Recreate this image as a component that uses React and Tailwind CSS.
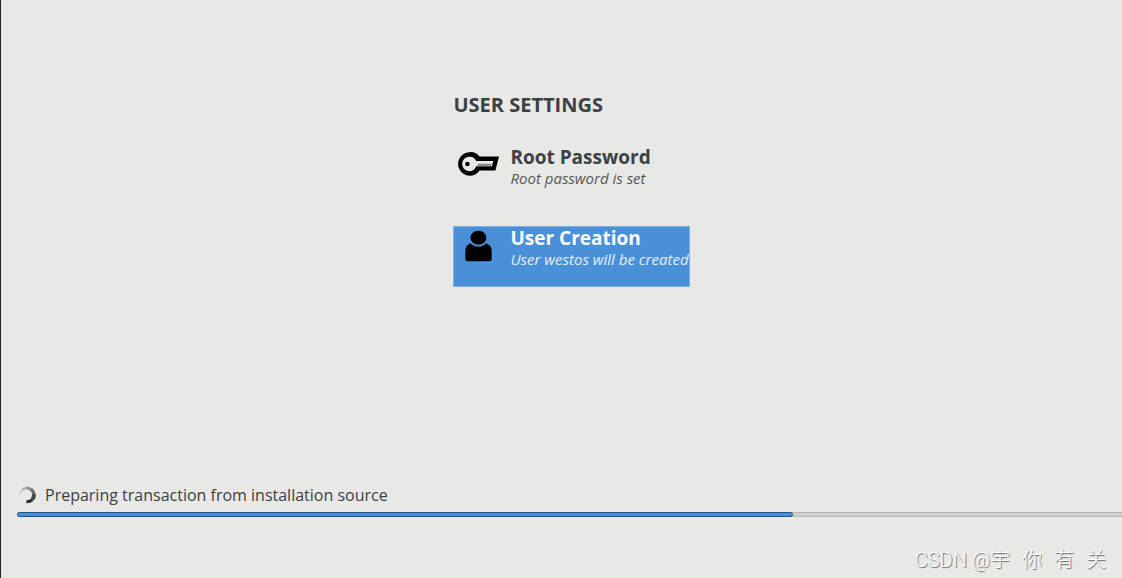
function KeyIcon() {
    return (
        <svg viewBox="0 0 48 40" className="h-10 w-12 shrink-0" aria-hidden="true">
            <path
                d="M15 6.2a11.8 11.8 0 1 0 10.6 18.4H41.4L45 10.4H25.6A12 12 0 0 0 15 6.2Z"
                fill="#000"
            />
            <path
                d="M15 10.8a7.2 7.2 0 1 0 7.2 9.4H37.8L39.2 15H22.2A7.2 7.2 0 0 0 15 10.8Z"
                fill="#e8e8e6"
            />
            <path d="M24 17.8H37.4L36.7 20.2H23.4Z" fill="#8c8c8c" />
            <circle cx="13.4" cy="18" r="2.3" fill="#000" />
        </svg>
    );
}

function UserIcon() {
    return (
        <svg viewBox="0 0 48 40" className="h-10 w-12 shrink-0" aria-hidden="true">
            <ellipse cx="24.4" cy="10.8" rx="8" ry="7" fill="#000" />
            <path
                d="M16.8 16.5C18.6 18.6 21.2 19.6 24.4 19.6S30.2 18.6 32 16.5C35.6 17.2 37.7 20.2 37.7 24.2V31.6Q37.7 34.2 35.2 34.2H13.8Q11.3 34.2 11.3 31.6V24.2C11.3 20.2 13.2 17.2 16.8 16.5Z"
                fill="#000"
            />
        </svg>
    );
}

function Spinner() {
    return (
        <svg viewBox="0 0 20 20" className="size-5" fill="none" stroke="#2e3436" aria-hidden="true">
            <path d="M2.6 9A8 8 0 0 1 5.2 5" strokeWidth="2" opacity="0.15" />
            <path d="M5.2 5A7.4 7.4 0 0 1 9.5 3" strokeWidth="2.4" opacity="0.3" />
            <path d="M9.5 3A7.2 7.2 0 0 1 14 4.4" strokeWidth="2.8" opacity="0.5" />
            <path d="M14 4.4A7.2 7.2 0 0 1 17 9" strokeWidth="3.4" opacity="0.7" />
            <path d="M17 9A7.2 7.2 0 0 1 15.2 14.6" strokeWidth="3.8" opacity="0.9" />
            <path d="M15.2 14.6A7.2 7.2 0 0 1 9.4 16.6" strokeWidth="3.4" />
        </svg>
    );
}

function Spoke({ icon, title, status, selected }) {
    return (
        <button
            type="button"
            className={
                selected
                    ? "flex h-[61px] items-start gap-2 border border-[#7fb0e4] bg-[#4a90d9] text-left text-white"
                    : "flex h-[61px] items-start gap-2 border border-transparent text-left"
            }
        >
            {icon}
            <span className="flex flex-col whitespace-nowrap">
                <span className="text-[19px] leading-[22px] font-bold">{title}</span>
                <span className="text-[15px] leading-5 italic opacity-85">{status}</span>
            </span>
        </button>
    );
}

export default function App() {
    return (
        <div
            className="flex min-h-screen flex-col overflow-hidden border-l border-[#222] bg-[#e8e8e6] text-[#3b4144]"
            style={{ fontFamily: '"Open Sans", "Noto Sans", "Noto Sans CJK SC", sans-serif' }}
        >
            <main className="flex flex-1 justify-center pt-[93px] pl-5">
                <section className="flex flex-col">
                    <h1 className="mb-7 text-xl leading-6 font-bold">USER SETTINGS</h1>
                    <div className="flex flex-col gap-5">
                        <Spoke icon={<KeyIcon />} title="Root Password" status="Root password is set" />
                        <Spoke
                            icon={<UserIcon />}
                            title="User Creation"
                            status="User westos will be created"
                            selected
                        />
                    </div>
                </section>
            </main>

            <footer className="pl-4">
                <label htmlFor="install-progress" className="flex items-center gap-2 text-base leading-6">
                    <Spinner />
                    Preparing transaction from installation source
                </label>
                <progress
                    id="install-progress"
                    max="1000"
                    value="702"
                    className="mt-[5px] block h-[5px] w-full appearance-none rounded-l-sm bg-[#d0d0cd] [&::-webkit-progress-bar]:rounded-l-sm [&::-webkit-progress-bar]:bg-[#d0d0cd] [&::-webkit-progress-bar]:shadow-[inset_0_1px_0_#b4b4b0,inset_0_-1px_0_#b4b4b0] [&::-webkit-progress-value]:rounded-sm [&::-webkit-progress-value]:border [&::-webkit-progress-value]:border-[#1f5288] [&::-webkit-progress-value]:bg-[#4a90d9]"
                />
                <p
                    className="mt-[29px] flex justify-end gap-3 pr-4 pb-1 text-xl leading-7 font-light text-white [text-shadow:1px_1px_1px_#666]"
                    style={{ fontFamily: 'Roboto, "Noto Sans CJK SC", sans-serif' }}
                >
                    <span>CSDN @宇</span>
                    <span>你</span>
                    <span>有</span>
                    <span>关</span>
                </p>
            </footer>
        </div>
    );
}
